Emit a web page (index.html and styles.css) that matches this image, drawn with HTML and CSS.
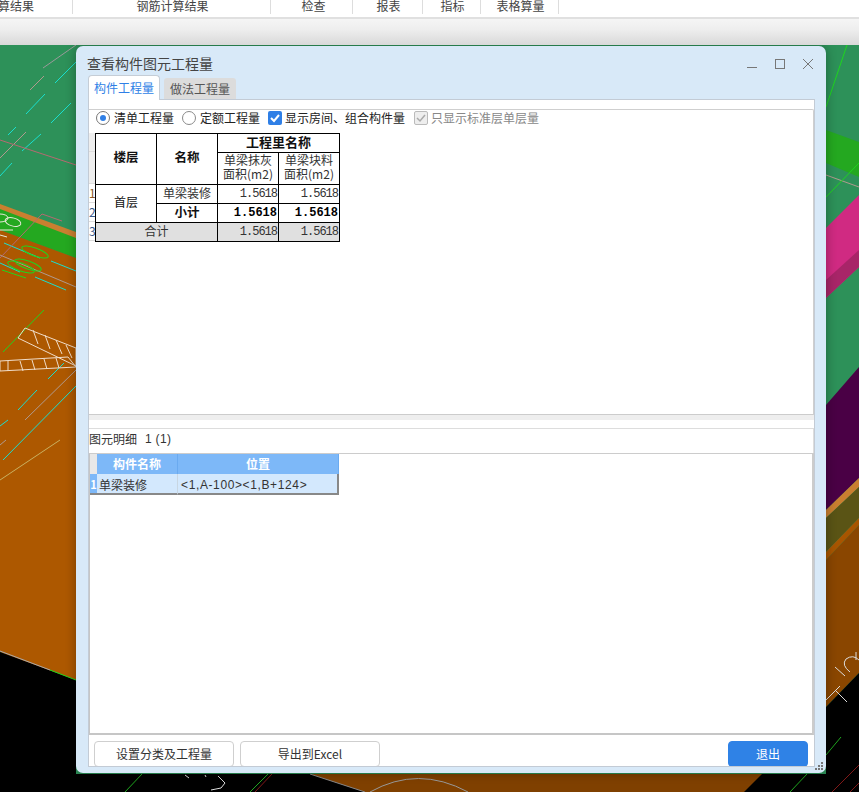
FILE: index.html
```html
<!DOCTYPE html>
<html lang="zh">
<head>
<meta charset="utf-8">
<title>查看构件图元工程量</title>
<link rel="stylesheet" href="styles.css">
</head>
<body>
<div class="app">
  <nav class="menu">
    <div class="menu-item w-a">算结果</div>
    <div class="menu-item w-b">钢筋计算结果</div>
    <div class="menu-item w-c">检查</div>
    <div class="menu-item w-d">报表</div>
    <div class="menu-item w-e">指标</div>
    <div class="menu-item w-f">表格算量</div>
  </nav>
  <div class="toolbar"></div>
  <div class="canvas">
    <svg class="scene" width="859" height="747" viewBox="0 45 859 747">
      <rect x="0" y="45" width="859" height="747" fill="#2d9159"/>
      <polygon points="0,204 76,235 76,258 0,230" fill="#24a820"/>
      <polygon points="0,204 76,232 76,238 0,209" fill="#c97f30"/>
      <polygon points="0,230 76,258 100,700 0,652" fill="#ad5800"/>
      <polygon points="0,652 76,680 76,792 0,792" fill="#000"/>
      <polygon points="826,130 859,142 859,177 826,163" fill="#24a820"/>
      <polygon points="826,228 859,195 859,267 826,298" fill="#d02a82"/>
      <polygon points="826,280 859,250 859,267 826,298" fill="#a82568"/>
      <polygon points="826,405 859,367 859,478 826,510" fill="#4a0045"/>
      <polygon points="826,510 859,478 859,487 826,518" fill="#c97f30"/>
      <polygon points="826,518 859,487 859,518 826,552" fill="#5a5415"/>
      <polygon points="826,552 859,518 859,525 826,560" fill="#a85500"/>
      <polygon points="826,560 859,525 859,673 826,707" fill="#8a4600"/>
      <polygon points="826,707 859,673 859,792 826,792" fill="#000"/>
      <polygon points="76,774 826,774 826,792 76,792" fill="#000"/>
      <polygon points="310,774 762,774 744,792 365,792" fill="#7f4000"/>
      <line x1="310" y1="774" x2="365" y2="792" stroke="#888" stroke-width="1"/>
      <path d="M370 792 Q418 765 468 792" fill="none" stroke="#999"/>
      <line x1="0" y1="651" x2="50" y2="670" stroke="#aaa"/>
      <line x1="50" y1="670" x2="76" y2="680" stroke="#1fd51f"/>
      <g stroke="#19e0d0" stroke-width="1" fill="none">
        <line x1="55" y1="83" x2="76" y2="62"/><line x1="26" y1="114" x2="45" y2="94"/>
        <line x1="51" y1="123" x2="71" y2="103"/><line x1="8" y1="135" x2="16" y2="127"/>
        <line x1="22" y1="151" x2="41" y2="134"/><line x1="0" y1="176" x2="12" y2="163"/>
        <line x1="4" y1="243" x2="40" y2="258"/><line x1="51" y1="261" x2="76" y2="271"/>
        <line x1="35" y1="277" x2="66" y2="290"/><line x1="0" y1="263" x2="20" y2="272"/>
        <line x1="48" y1="379" x2="64" y2="363"/><line x1="18" y1="410" x2="37" y2="390"/>
        <line x1="3" y1="460" x2="76" y2="386"/><line x1="0" y1="426" x2="8" y2="420"/>
      </g>
      <g stroke="#b09a8e" stroke-width="1" fill="none">
        <line x1="25" y1="420" x2="76" y2="370"/><line x1="0" y1="445" x2="6" y2="440"/>
        <line x1="0" y1="255" x2="76" y2="287"/>
        <line x1="43" y1="68" x2="76" y2="45" stroke="#9a9a9a"/>
        <line x1="30" y1="90" x2="44" y2="76"/>
        <line x1="0" y1="158" x2="26" y2="132"/>
        <line x1="826" y1="175" x2="859" y2="187"/>
      </g>
      <line x1="60" y1="480" x2="0" y2="520" stroke="#c8b060" transform="translate(0 -40)"/>
      <polyline points="0,140 76,165" stroke="#b56a70" fill="none"/>
      <polyline points="0,258 42,214 62,221" stroke="#b56a70" fill="none"/>
      <g stroke="#1fd51f" fill="none">
        <line x1="3" y1="352" x2="44" y2="310"/>
        <line x1="826" y1="107" x2="847" y2="45"/>
        <line x1="826" y1="197" x2="859" y2="163"/>
        <ellipse cx="35" cy="252" rx="14" ry="4" transform="rotate(20 35 252)"/>
        <ellipse cx="28" cy="265" rx="14" ry="4" transform="rotate(20 28 265)"/>
        <ellipse cx="21" cy="267" rx="14" ry="4" transform="rotate(20 21 267)"/>
        <line x1="2" y1="270" x2="26" y2="278"/>
      </g>
      <g stroke="#e8e8d8" fill="none">
        <ellipse cx="13" cy="222" rx="8" ry="4" transform="rotate(15 13 222)"/>
        <ellipse cx="0" cy="218" rx="8" ry="4"/>
        <line x1="0" y1="230" x2="13" y2="230"/><line x1="0" y1="235" x2="7" y2="237"/>
      </g>
      <g stroke="#f0dcc8" stroke-width="1" fill="none">
        <polyline points="25,328 76,348 76,366 18,338 25,328"/>
        <polyline points="0,361 68,357 76,367 0,371 0,361"/>
        <path d="M33 330l5 14M45 335l5 14M56 340l6 14M66 345l6 13M8 361v10M20 361l3 10M32 360l3 10M44 359l3 10M56 358l3 10"/>
      </g>
      <g stroke="#1fa51f" fill="none">
        <line x1="125" y1="792" x2="142" y2="774"/>
        <line x1="250" y1="792" x2="268" y2="774"/>
        <line x1="790" y1="792" x2="807" y2="774"/>
        <line x1="826" y1="755" x2="841" y2="737"/>
      </g>
      <g stroke="#801818" fill="none">
        <line x1="255" y1="792" x2="272" y2="774"/>
        <line x1="832" y1="792" x2="859" y2="765"/>
        <line x1="850" y1="792" x2="859" y2="783"/>
      </g>
      <path d="M185 775l4 3M205 775l1 2M218 776l7 7-4 5-10 2" stroke="#ddd" fill="none"/>
      <path d="M826 700l14 -14M835 690l12 12M845 676l-10 -9M850 672q-9 -7 -4 -13q7 -5 13 1M856 660v-8" stroke="#ddd" fill="none"/>
    </svg>
    <section class="dialog">
      <header class="title-bar">
        <h1 class="title">查看构件图元工程量</h1>
        <div class="win-controls">
          <svg width="12" height="12" viewBox="0 0 12 12"><line x1="1" y1="9.5" x2="11" y2="9.5" class="win-icon"/></svg>
          <svg width="12" height="12" viewBox="0 0 12 12"><rect x="1.5" y="1.5" width="9" height="9" class="win-icon"/></svg>
          <svg width="12" height="12" viewBox="0 0 12 12"><path d="M1 1l10 10M11 1L1 11" class="win-icon"/></svg>
        </div>
      </header>
      <div class="tabs">
        <div class="tab tab-active">构件工程量</div>
        <div class="tab tab-idle">做法工程量</div>
      </div>
      <div class="body">
        <div class="top-gap"></div>
        <div class="top-panel">
          <div class="options">
            <label class="opt"><span class="radio radio-on"></span>清单工程量</label>
            <label class="opt"><span class="radio"></span>定额工程量</label>
            <label class="opt opt-tight"><span class="check check-on"><svg width="14" height="14" viewBox="0 0 14 14"><path d="M3 7l3 3 5-6" fill="none" stroke="#fff" stroke-width="2"/></svg></span>显示房间、组合构件量</label>
            <label class="opt opt-off opt-tight"><span class="check check-off"><svg width="14" height="14" viewBox="0 0 14 14"><path d="M3 7l3 3 5-6" fill="none" stroke="#aaa" stroke-width="1.5"/></svg></span>只显示标准层单层量</label>
          </div>
          <div class="sheet-wrap">
            <div class="row-heads">
              <div class="rh rh-a"></div>
              <div class="rh rh-b"></div>
              <div class="rh rh-c">1</div>
              <div class="rh rh-c rh-blue">2</div>
              <div class="rh rh-c rh-blue">3</div>
            </div>
            <table class="sheet">
              <colgroup><col class="c1"><col class="c1"><col class="c1"><col class="c1"></colgroup>
              <tr class="r1"><th rowspan="2" class="corner">楼层</th><th rowspan="2" class="corner">名称</th><th colspan="2" class="big">工程里名称</th></tr>
              <tr class="r2"><td class="head2">单梁抹灰<br>面积(m2)</td><td class="head2">单梁块料<br>面积(m2)</td></tr>
              <tr class="r3"><td rowspan="2" class="first">首层</td><td class="mid">单梁装修</td><td class="num">1.5618</td><td class="num">1.5618</td></tr>
              <tr class="r3"><th class="sub">小计</th><td class="num bold">1.5618</td><td class="num bold">1.5618</td></tr>
              <tr class="r3 total"><td colspan="2" class="mid">合计</td><td class="num">1.5618</td><td class="num">1.5618</td></tr>
            </table>
          </div>
        </div>
        <div class="splitter"></div>
        <div class="detail-head"><span>图元明细</span><span class="count">1 (1)</span></div>
        <div class="detail-panel">
          <div class="grid">
            <div class="g-corner"></div><div class="g-h g-col1">构件名称</div><div class="g-h g-col2">位置</div>
            <div class="g-index">1</div><div class="g-c g-col1">单梁装修</div><div class="g-c g-col2 g-pos">&lt;1,A-100&gt;&lt;1,B+124&gt;</div>
          </div>
        </div>
        <footer class="actions">
          <button class="btn">设置分类及工程量</button>
          <button class="btn">导出到Excel</button>
          <button class="btn btn-primary">退出</button>
        </footer>
      </div>
      <svg class="grip" width="9" height="9" viewBox="0 0 9 9"><path d="M6 0h2v2H6zM3 3h2v2H3zM6 3h2v2H6zM0 6h2v2H0zM3 6h2v2H3zM6 6h2v2H6z" fill="#777"/></svg>
    </section>
  </div>
</div>
</body>
</html>
```
FILE: styles.css
```css
* { box-sizing: border-box; }
html, body { margin: 0; height: 100%; overflow: hidden; background: #fff; }
body { font-family: "Noto Sans CJK SC", "Noto Sans", sans-serif; font-size: 12px; color: #333; }
.app { width: 859px; height: 792px; display: flex; flex-direction: column; }

.menu { height: 19px; display: flex; background: #fff; border-bottom: 2px solid #e0e0e0; flex: none; }
.menu-item { height: 14px; line-height: 12px; text-align: center; border-right: 1px solid #ddd; color: #444; white-space: nowrap; }
.w-a { width: 73px; text-align: left; text-indent: -2px; }
.w-b { width: 198px; padding-left: 2px; }
.w-c { width: 82px; padding-left: 4px; }
.w-d { width: 70px; padding-left: 2px; }
.w-e { width: 58px; padding-left: 2px; }
.w-f { width: 78px; padding-left: 2px; }

.toolbar { height: 26px; flex: none; background: linear-gradient(#f5f5f5 0, #eeeeee 40%, #d9d9d9 100%); }
.canvas { position: relative; flex: 1; overflow: hidden; }
.scene { position: absolute; left: 0; top: 0; display: block; }

.dialog { position: absolute; left: 76px; top: 1px; width: 750px; height: 727px; background: #d8e9f8; border-radius: 7px; display: flex; flex-direction: column; padding: 0 11px 6px 12px; box-shadow: 0 0 11px rgba(0,0,0,.32); }
.title-bar { height: 29px; flex: none; display: flex; align-items: flex-end; justify-content: space-between; }
.title { margin: 0 0 2px -1px; font-size: 14px; font-weight: 400; line-height: 20px; color: #444; }
.win-controls { display: flex; gap: 16px; margin: 0 1px 5px 0; }
.win-controls svg { display: block; }
.win-icon { fill: none; stroke: #777; stroke-width: 1; }

.tabs { display: flex; gap: 4px; flex: none; align-items: flex-end; height: 24px; }
.tab { width: 72px; text-align: center; font-size: 12px; }
.tab-active { height: 25px; line-height: 24px; background: #fff; color: #2f7fe6; border: 1px solid #c5cdd6; border-bottom: 0; border-radius: 4px 4px 0 0; position: relative; z-index: 1; margin-bottom: -1px; }
.tab-idle { height: 21px; line-height: 21px; background: #dcdcdc; color: #555; border-radius: 3px 3px 0 0; }

.body { flex: 1; display: flex; flex-direction: column; background: #fff; border: 1px solid #c3cbd5; min-height: 0; }
.top-gap { height: 9px; flex: none; }
.top-panel { height: 306px; flex: none; border: 1px solid #cfcfcf; border-left: 0; border-bottom-color: #ccc; border-radius: 0 2px 0 0; }
.options { display: flex; align-items: center; height: 16px; padding-left: 7px; margin-bottom: 7px; }
.opt { display: flex; align-items: center; gap: 4px; margin-right: 8px; color: #222; line-height: 16px; }
.opt-tight { gap: 3px; margin-right: 9px; }
.opt-off { color: #888; }
.radio { width: 14px; height: 14px; border-radius: 50%; border: 1px solid #8a8a8a; background: #fff; display: inline-block; position: relative; }
.radio-on { border-color: #777; }
.radio-on::after { content: ""; position: absolute; left: 3px; top: 3px; width: 6px; height: 6px; border-radius: 50%; background: #2f7fe6; }
.check { width: 14px; height: 14px; border-radius: 2px; display: inline-block; }
.check svg { display: block; }
.check-on { background: #2f7fe6; }
.check-off { border: 1px solid #bbb; background: #eee; }
.check-off svg { margin: -1px; }

.sheet-wrap { display: flex; align-items: flex-start; }
.row-heads { width: 6px; flex: none; color: #8a5a2a; font-size: 12px; line-height: 17px; text-align: left; overflow: hidden; }
.rh { background: #eeeeee; border-bottom: 1px solid #ddd; overflow: hidden; }
.rh-a { height: 19px; }
.rh-b { height: 32px; }
.rh-c { height: 19px; background: #fff; }
.rh-blue { color: #3a5a8a; }

.sheet { border-collapse: collapse; table-layout: fixed; width: 245px; font-family: "Noto Sans CJK SC", sans-serif; color: #111; background: #fff; border: 1px solid #000; }
.c1 { width: 61px; }
.sheet th, .sheet td { border: 1px solid #000; padding: 0 0 3px; text-align: center; overflow: hidden; white-space: nowrap; line-height: 14px; }
.sheet th { font-weight: 700; font-size: 12.5px; }
.sheet th.corner { padding-bottom: 5px; }
.r1 { height: 19px; }
.r2 { height: 32px; }
.r3 { height: 19px; }
.sheet th.big { font-size: 13px; }
.sheet td.head2 { font-size: 12px; line-height: 14px; color: #333; padding-bottom: 3px; }
.first { font-size: 12px; }
.mid { font-size: 12px; color: #333; }
.sheet td.num { text-align: right; padding: 0 1px 1px 0; font-family: "Liberation Mono", monospace; font-size: 12px; letter-spacing: -1px; color: #333; }
.sheet td.bold { font-weight: 700; letter-spacing: 0; color: #000; }
.total td { background: #e0e0e0; }

.splitter { height: 14px; flex: none; background: #fff; border-bottom: 1px solid #ddd; }
.splitter::before { content: ""; display: block; height: 5px; background: #eeeeee; }
.detail-head { height: 24px; flex: none; display: flex; align-items: center; gap: 8px; padding-bottom: 5px; border-right: 1px solid #ddd; color: #333; line-height: 18px; }
.count { font-family: "Liberation Sans", sans-serif; letter-spacing: .3px; }
.detail-panel { height: 282px; flex: none; border-style: solid; border-width: 1px 2px 2px 1px; border-color: #ccc #ccc #c6c6c6 #c6c6c6; }
.grid { display: grid; grid-template-columns: 7px 81px 161px; grid-template-rows: 20px 21px; width: 249px; }
.g-corner { background: #e8e8e8; }
.g-h { background: #7db8f8; color: #fff; font-weight: 700; text-align: center; line-height: 20px; border-right: 1px solid #6aaaf0; }
.g-index { background: #7db8f8; color: #fff; font-weight: 700; line-height: 20px; text-align: center; font-size: 11px; overflow: hidden; border-bottom: 2px solid #888; }
.g-c { background: #d3e8fd; line-height: 20px; color: #333; border-bottom: 2px solid #888; padding: 1px 0 0 2px; border-right: 1px solid #c8d6e2; }
.g-col2.g-c { border-right: 2px solid #888; }
.g-pos { font-family: "Liberation Sans", sans-serif; font-size: 12px; letter-spacing: .62px; padding-left: 3px; white-space: nowrap; }

.actions { height: 31px; flex: none; display: flex; align-items: flex-start; gap: 6px; padding: 6px 6px 0 5px; overflow: hidden; }
.btn { width: 140px; height: 26px; border: 1px solid #cfcfcf; border-radius: 4px; background: #fff; font: 12px/24px "Noto Sans CJK SC", sans-serif; color: #333; padding: 0; }
.btn-primary { width: 80px; margin-left: auto; background: #2f82e6; border-color: #2f82e6; color: #fff; }
.grip { position: absolute; right: 2px; bottom: 2px; }
```
